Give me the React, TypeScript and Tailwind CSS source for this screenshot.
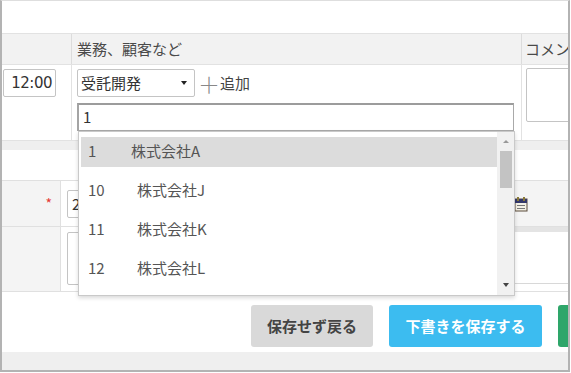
import React from 'react';

const companies = [
	{ no: '1', name: '株式会社A' },
	{ no: '10', name: '株式会社J' },
	{ no: '11', name: '株式会社K' },
	{ no: '12', name: '株式会社L' },
	{ no: '13', name: '株式会社M' },
];

const CalendarIcon = () => (
	<svg width="14" height="16" viewBox="0 0 14 16">
		<rect x="1" y="3" width="12" height="12" fill="#f4f1e6" stroke="#5a4a3a" strokeWidth="1" />
		<rect x="1" y="3" width="12" height="4" fill="#34386a" />
		<rect x="3" y="1" width="2" height="4" fill="#8a7a3a" />
		<rect x="9" y="1" width="2" height="4" fill="#8a7a3a" />
		<rect x="3" y="9" width="8" height="1" fill="#777" />
		<rect x="3" y="12" width="8" height="1" fill="#777" />
	</svg>
);

const CompanyDropdown = () => {
	return (
		<div className="absolute left-[76px] top-[130px] w-[437px] h-[165px] bg-white border border-[#c9c9c9] shadow-[0_2px_4px_rgba(0,0,0,0.15)] flex overflow-hidden">
			{/* Options */}
			<div className="flex-1 pl-[2px] overflow-hidden">
				{companies.map((c, i) => (
					<div key={c.no} className="h-[39px] flex items-center">
						<div
							className={
								i === 0
									? 'w-full h-[30px] flex items-center bg-[#dcdcdc] pl-[7px] text-[#555] text-[15px]'
									: 'w-full h-[30px] flex items-center pl-[7px] text-[#555] text-[15px]'
							}
						>
							<span className={c.no === '1' ? 'w-[43px]' : 'w-[49px]'}>{c.no}</span>
							<span>{c.name}</span>
						</div>
					</div>
				))}
			</div>
			{/* Scrollbar */}
			<div className="w-[17px] bg-[#f1f1f1] flex flex-col items-center">
				<div className="mt-[8px] w-0 h-0 border-l-[3px] border-r-[3px] border-b-[3px] border-l-transparent border-r-transparent border-b-[#999]" />
				<div className="mt-[8px] w-[12px] h-[37px] bg-[#c3c3c3]" />
				<div className="mt-auto mb-[8px] w-0 h-0 border-l-[3px] border-r-[3px] border-t-[4px] border-l-transparent border-r-transparent border-t-[#444]" />
			</div>
		</div>
	);
};

const App = () => {
	return (
		<div className="w-[571px] h-[373px] bg-white overflow-hidden font-['Noto_Sans_CJK_JP','Noto_Sans',sans-serif]">
			<div className="relative w-[570px] h-[372px] border-2 border-t border-[#b3b3b3] border-t-[#dedede] flex flex-col overflow-hidden">
				{/* Top blank */}
				<div className="h-[32px] shrink-0" />

				{/* Table header */}
				<div className="h-[32px] shrink-0 flex bg-[#f2f2f2] border-t border-b border-[#e2e2e2] text-[15px] text-[#4a4a4a]">
					<div className="w-[70px] shrink-0 border-r border-[#dcdcdc]" />
					<div className="w-[450px] shrink-0 border-r border-[#dcdcdc] flex items-center pl-[5px]">業務、顧客など</div>
					<div className="flex-1 flex items-center pl-[3px] whitespace-nowrap overflow-hidden">コメント</div>
				</div>

				{/* Row 1 */}
				<div className="h-[75px] shrink-0 flex">
					<div className="w-[70px] shrink-0 border-r border-[#e2e2e2] pt-[4px] pl-[1px]">
						<div className="w-[53px] h-[28px] border border-[#c4c4c4] rounded-[2px] flex items-center justify-end pr-[3px] text-[15px] text-[#333] font-['DejaVu_Sans',sans-serif] tracking-[-0.5px]">
							12:00
						</div>
					</div>
					<div className="w-[450px] shrink-0 border-r border-[#e2e2e2] pl-[5px] pt-[4px]">
						<div className="flex items-center">
							<div className="w-[118px] h-[28px] border border-[#c4c4c4] rounded-[2px] flex items-center pl-[3px] pr-[7px] text-[15px] text-[#333]">
								<span className="flex-1">受託開発</span>
								<span className="w-0 h-0 border-l-[3px] border-r-[3px] border-t-[4px] border-l-transparent border-r-transparent border-t-[#222]" />
							</div>
							<span className="ml-[3px] text-[22px] leading-none text-[#888] font-light">＋</span>
							<span className="text-[15px] text-[#444]">追加</span>
						</div>
						<div className="mt-[6px] w-[437px] h-[28px] border border-[#a9a9a9] border-t-2 border-l-2 border-t-[#9c9c9c] border-l-[#a4a4a4] flex items-center pl-[4px] text-[15px] text-[#333]">
							1
						</div>
					</div>
					<div className="flex-1 pl-[4px] pt-[3px]">
						<div className="w-[60px] h-[54px] border border-[#c4c4c4] rounded-[2px]" />
					</div>
				</div>

				{/* Band */}
				<div className="h-[10px] shrink-0 bg-[#efefef] border-t border-[#e2e2e2]" />
				<div className="h-[30px] shrink-0" />

				{/* Row 2 */}
				<div className="h-[46px] shrink-0 flex border-t border-[#e0e0e0]">
					<div className="w-[59px] shrink-0 bg-[#f4f4f4] border-r border-[#e0e0e0] flex items-center justify-end pr-[8px] text-[#e53935] text-[14px]">
						*
					</div>
					<div className="w-[451px] shrink-0 pl-[6px] pt-[9px]">
						<div className="w-[120px] h-[28px] border border-[#c4c4c4] rounded-[2px] flex items-center pl-[4px] text-[15px] text-[#333]">
							2
						</div>
					</div>
					<div className="flex-1 bg-[#f4f4f4] border-l border-[#e0e0e0] flex items-center pl-[1px]">
						<CalendarIcon />
					</div>
				</div>

				{/* Row 3 */}
				<div className="h-[66px] shrink-0 flex border-t border-[#e0e0e0] border-b">
					<div className="w-[59px] shrink-0 bg-[#f4f4f4] border-r border-[#e0e0e0]" />
					<div className="w-[451px] shrink-0 pl-[6px] pt-[5px]">
						<div className="w-[420px] h-[53px] border border-[#c4c4c4] rounded-[2px]" />
					</div>
					<div className="flex-1 border-t-[5px] border-[#e4e4e4]">
						<div className="h-[52px] border-b border-[#d8d8d8]" />
					</div>
				</div>

				{/* Buttons */}
				<div className="h-[60px] shrink-0 flex items-start pt-[13px] pl-[249px] gap-[16px] text-[15px] font-bold whitespace-nowrap">
					<button className="w-[122px] h-[42px] shrink-0 rounded-[3px] bg-[#d9d9d9] text-[#444]">保存せず戻る</button>
					<button className="w-[153px] h-[42px] shrink-0 rounded-[3px] bg-[#3cbcf0] text-white">下書きを保存する</button>
					<button className="w-[110px] h-[42px] shrink-0 rounded-[3px] bg-[#2ea66a] text-white">保存する</button>
				</div>

				{/* Footer band */}
				<div className="flex-1 bg-[#efefef]" />

				<CompanyDropdown />
			</div>
		</div>
	);
};

export default App;
